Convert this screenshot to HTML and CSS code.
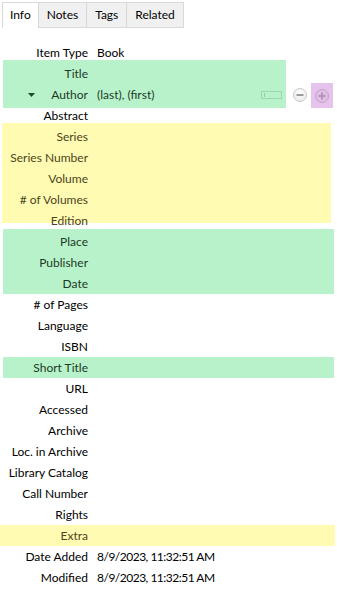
FILE: index.html
```html
<!DOCTYPE html>
<html lang="en">
<head>
    <meta charset="UTF-8">
    <meta name="viewport" content="width=device-width, initial-scale=1.0">
    <title>Item Pane</title>
    <link rel="stylesheet" href="styles.css">
</head>
<body>
    <div class="tabs">
        <div class="tab active">Info</div>
        <div class="tab">Notes</div>
        <div class="tab">Tags</div>
        <div class="tab">Related</div>
    </div>

    <div class="fields">
        <div class="row"><span class="label">Item Type</span><span class="value">Book</span></div>

        <!-- title + creators -->
        <div class="group green group-creators">
            <div class="row"><span class="label">Title</span><span class="value"></span></div>
            <div class="row author">
                <span class="label">
                    <svg class="twisty" width="7" height="4" viewBox="0 0 7 4"><path d="M0 0H7L3.5 4Z" fill="#1e4a2b"/></svg>
                    Author
                </span>
                <span class="value">(last), (first)</span>
                <span class="mode-box"><span class="caret"></span></span>
                <span class="buttons">
                    <span class="btn-minus">
                        <svg width="14" height="14" viewBox="0 0 14 14">
                            <defs>
                                <radialGradient id="mg" cx="50%" cy="35%" r="65%">
                                    <stop offset="0" stop-color="#ffffff"/>
                                    <stop offset="1" stop-color="#e9e9e9"/>
                                </radialGradient>
                            </defs>
                            <circle cx="7" cy="7" r="6.5" fill="url(#mg)" stroke="#c9c9c9"/>
                            <rect x="3.5" y="6" width="7" height="2" fill="#9c9c9c"/>
                        </svg>
                    </span>
                    <span class="btn-plus">
                        <svg width="14" height="14" viewBox="0 0 14 14">
                            <circle cx="7" cy="7" r="6.5" fill="#e2bde8" stroke="#bda4c2"/>
                            <rect x="3.5" y="6" width="7" height="2" fill="#ae98b3"/>
                            <rect x="6" y="3.5" width="2" height="7" fill="#ae98b3"/>
                        </svg>
                    </span>
                </span>
            </div>
        </div>

        <div class="row"><span class="label">Abstract</span><span class="value"></span></div>

        <div class="group yellow group-series">
            <div class="row"><span class="label">Series</span><span class="value"></span></div>
            <div class="row"><span class="label">Series Number</span><span class="value"></span></div>
            <div class="row"><span class="label">Volume</span><span class="value"></span></div>
            <div class="row"><span class="label"># of Volumes</span><span class="value"></span></div>
            <div class="row"><span class="label">Edition</span><span class="value"></span></div>
        </div>

        <div class="group green group-publish">
            <div class="row"><span class="label">Place</span><span class="value"></span></div>
            <div class="row"><span class="label">Publisher</span><span class="value"></span></div>
            <div class="row"><span class="label">Date</span><span class="value"></span></div>
        </div>

        <div class="row"><span class="label"># of Pages</span><span class="value"></span></div>
        <div class="row"><span class="label">Language</span><span class="value"></span></div>
        <div class="row"><span class="label">ISBN</span><span class="value"></span></div>

        <div class="group green group-short">
            <div class="row"><span class="label">Short Title</span><span class="value"></span></div>
        </div>

        <div class="row"><span class="label">URL</span><span class="value"></span></div>
        <div class="row"><span class="label">Accessed</span><span class="value"></span></div>
        <div class="row"><span class="label">Archive</span><span class="value"></span></div>
        <div class="row"><span class="label">Loc. in Archive</span><span class="value"></span></div>
        <div class="row"><span class="label">Library Catalog</span><span class="value"></span></div>
        <div class="row"><span class="label">Call Number</span><span class="value"></span></div>
        <div class="row"><span class="label">Rights</span><span class="value"></span></div>

        <div class="group yellow group-extra">
            <div class="row"><span class="label">Extra</span><span class="value"></span></div>
        </div>

        <div class="row"><span class="label">Date Added</span><span class="value date">8/9/2023, 11:32:51 AM</span></div>
        <div class="row"><span class="label">Modified</span><span class="value date">8/9/2023, 11:32:51 AM</span></div>
    </div>
</body>
</html>
```

FILE: styles.css
```css
body {
    margin: 0;
    background: #fff;
    color: #000;
    font-family: Lato, "Noto Sans", sans-serif;
    font-size: 12px;
}

/* tab strip */
.tabs {
    display: flex;
    padding: 2px 0 0 2px;
    height: 26px;
}
.tab {
    padding: 0 8px;
    line-height: 24px;
    background: #f0f0f0;
    border: 1px solid #d9d9d9;
    border-left: none;
}
.tab.active {
    background: #fff;
    border-left: 1px solid #d9d9d9;
    border-bottom: none;
    padding: 0 7px;
}

/* field list */
.fields {
    padding-top: 14px;
}
.row {
    display: grid;
    grid-template-columns: 88px 1fr;
    column-gap: 9px;
    height: 21px;
    line-height: 21px;
}
.label {
    text-align: right;
    white-space: nowrap;
}
.value {
    white-space: nowrap;
}
.value.date {
    letter-spacing: -0.5px;
}

.group {
    margin-left: 3px;
}
.group .row {
    grid-template-columns: 85px 1fr;
}
.green {
    background: #b8f2cb;
}
.green .label,
.green .value {
    color: #1c3a25;
}
.yellow {
    background: #fffbb3;
}
.yellow .label {
    color: #4a4520;
}

.group-creators {
    margin: -3px 51px -3px 3px;
    padding: 3px 0;
}
.group-series {
    margin: -3px 6px 0 2px;
    padding-top: 3px;
    height: 97px;
}
.group-series .row {
    grid-template-columns: 86px 1fr;
}
.group-publish {
    margin: 6px 3px 0 3px;
    padding-top: 2px;
}
.group-short {
    margin-right: 3px;
}
.group-extra {
    margin: 0 2px 0 0;
}
.group-extra .row {
    grid-template-columns: 88px 1fr;
}

/* creator row */
.row.author {
    display: flex;
    align-items: center;
    column-gap: 0;
}
.author .label {
    width: 85px;
    display: flex;
    align-items: center;
    justify-content: flex-end;
    gap: 16px;
}
.author .value {
    flex: 1;
    margin-left: 9px;
}
.mode-box {
    width: 19px;
    height: 6px;
    border: 1px solid #a3d3b0;
    margin-right: 2px;
    display: flex;
    align-items: center;
}
.caret {
    width: 1px;
    height: 4px;
    margin-left: 2px;
    background: #9cc8a8;
}
.buttons {
    display: flex;
    align-items: flex-start;
    margin-right: -47px;
    margin-left: 9px;
    align-self: flex-start;
}
.btn-minus {
    display: flex;
    margin-top: 4px;
}
.btn-plus {
    display: flex;
    align-items: center;
    justify-content: center;
    width: 22px;
    height: 25px;
    margin-left: 4px;
    margin-top: -1px;
    background: #e6c3ec;
}
```
